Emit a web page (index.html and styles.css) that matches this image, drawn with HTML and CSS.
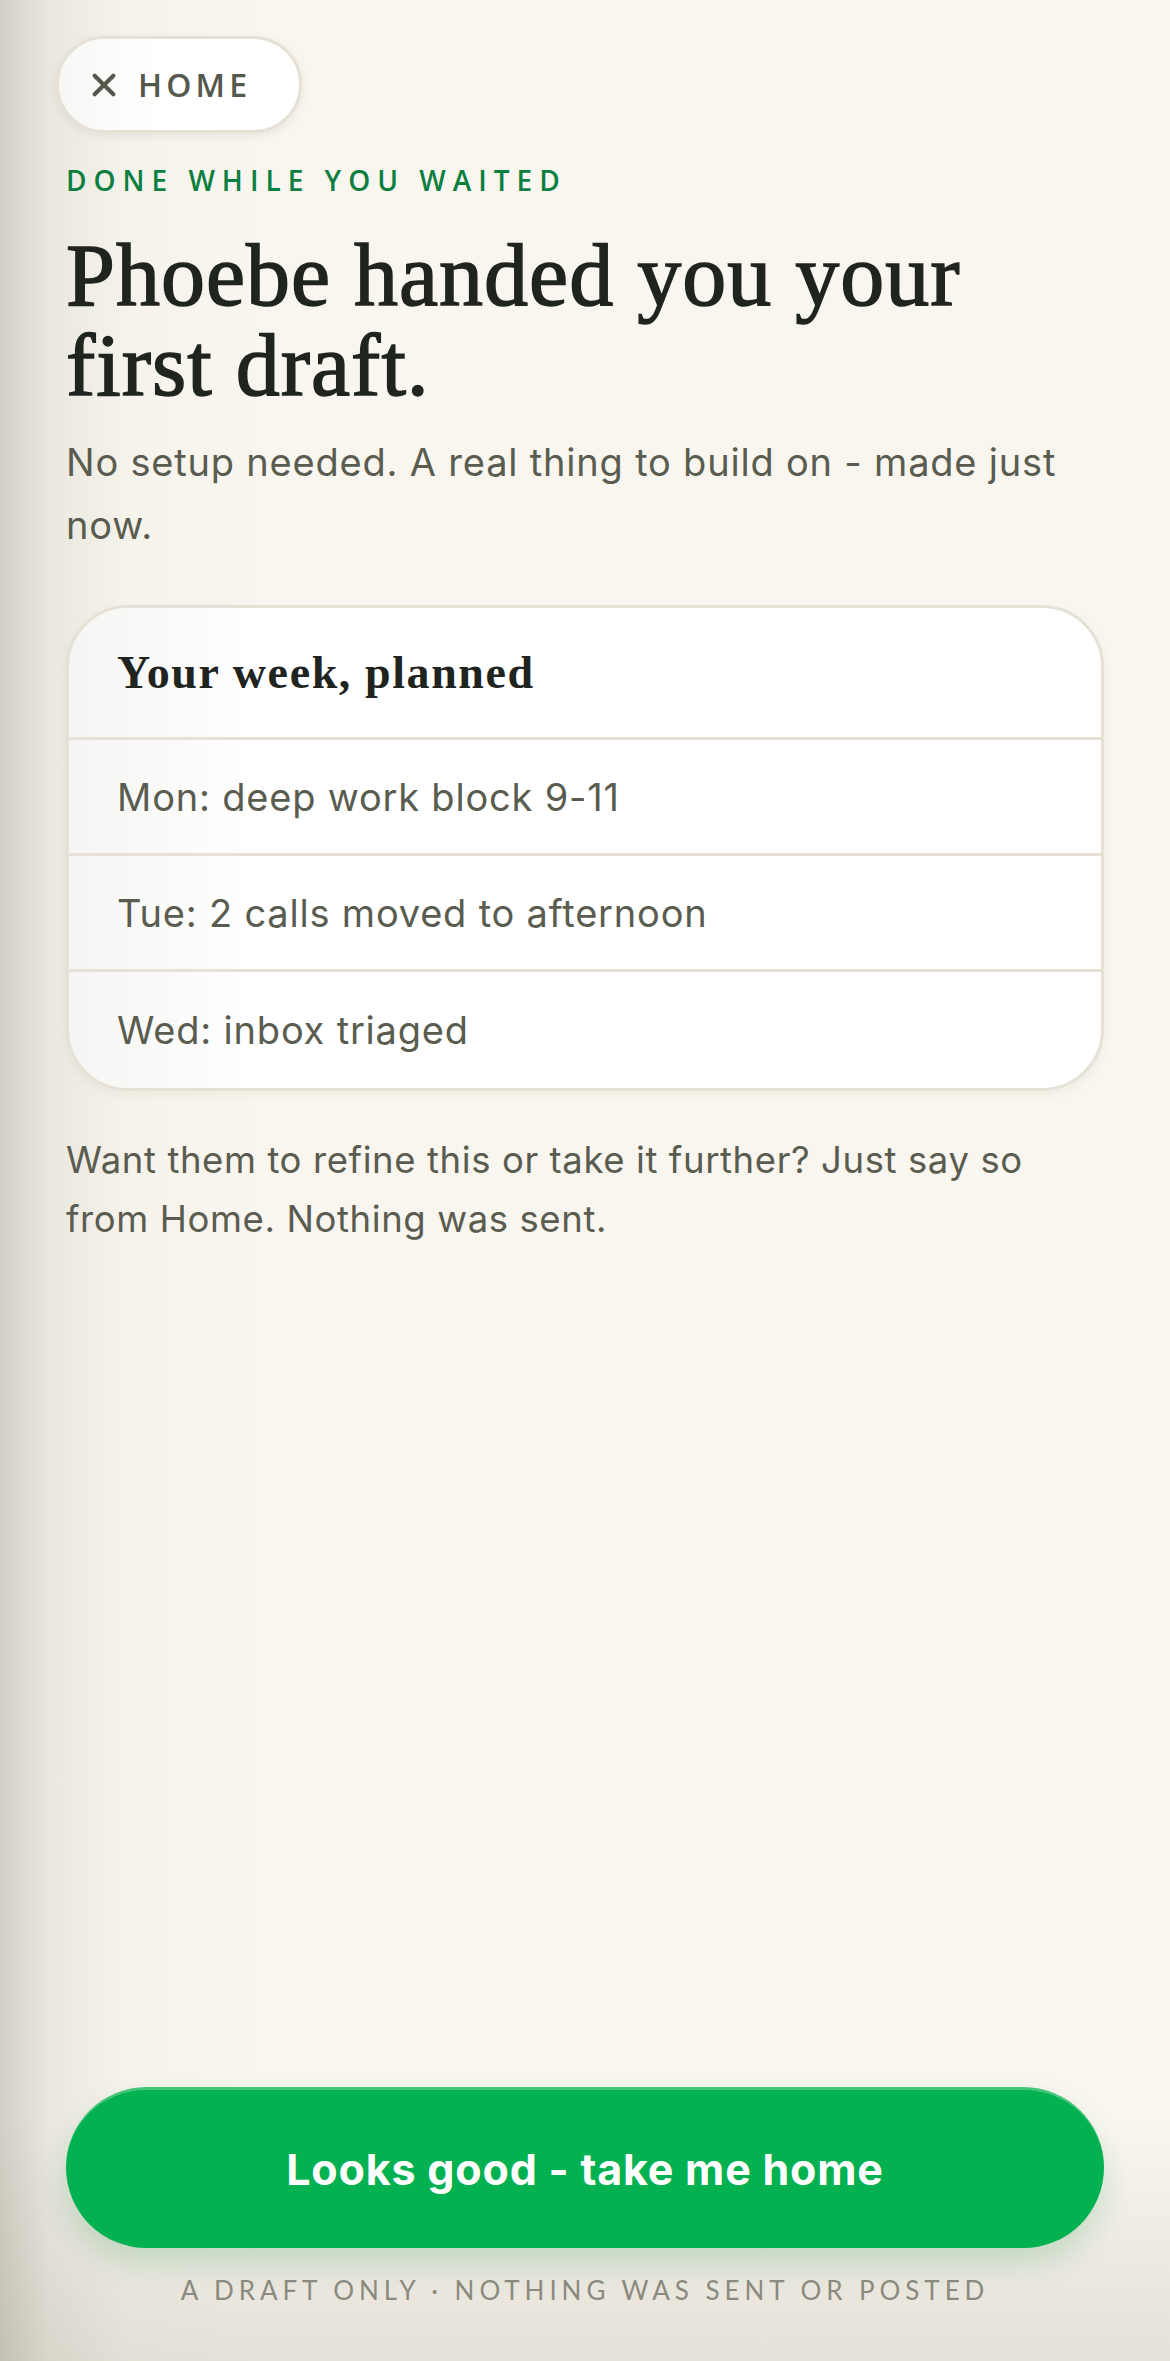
FILE: index.html
```html
<!DOCTYPE html>
<html lang="en">
<head>
<meta charset="UTF-8">
<meta name="viewport" content="width=device-width, initial-scale=1.0">
<title>First draft</title>

<link rel="stylesheet" href="styles.css">
</head>

<body>

<div class="page">

<button class="home-btn">
<svg class="home-x" viewBox="0 0 24 24" width="28" height="28"><path d="M4 4L20 20M20 4L4 20"/></svg>
<span>HOME</span>
</button>

<div class="eyebrow">DONE WHILE YOU WAITED</div>

<h1>Phoebe handed you your first draft.</h1>

<p class="lede">No setup needed. A real thing to build on - made just now.</p>

<div class="card">
<div class="card-title">Your week, planned</div>
<div class="row">Mon: deep work block 9-11</div>
<div class="row">Tue: 2 calls moved to afternoon</div>
<div class="row">Wed: inbox triaged</div>
</div>

<p class="note">Want them to refine this or take it further? Just say so from Home. Nothing was sent.</p>

<div class="footer">
<button class="cta">Looks good - take me home</button>
<div class="fineprint">A DRAFT ONLY · NOTHING WAS SENT OR POSTED</div>
</div>

</div>

</body>
</html>
```

FILE: styles.css
```css
*{box-sizing:border-box;}

html,body{height:100%;}

body{
margin:0;
font-family:Inter,"Noto Sans",sans-serif;
color:#5a5c50;
background:
linear-gradient(90deg,rgba(120,115,100,.3) 0,rgba(150,150,135,.15) 50px,rgba(200,195,180,.06) 130px,rgba(249,246,239,0) 260px),
linear-gradient(180deg,rgba(249,246,239,0) 0,rgba(249,246,239,0) 2120px,rgba(220,216,206,.7) 100%),
#f9f6ef;
}

.page{
min-height:100%;
display:flex;
flex-direction:column;
padding:36px 66px 0;
}

.home-btn{
align-self:flex-start;
margin-left:-10px;
height:97px;
padding:0 48px 0 31px;
display:flex;
align-items:center;
gap:20px;
border:3px solid #e6e1d4;
border-radius:50px;
background:linear-gradient(90deg,#f7f7f5,#fff 40%);
box-shadow:0 3px 8px rgba(120,110,90,.12);
font-family:"Open Sans",sans-serif;
font-weight:600;
font-size:32px;
letter-spacing:.13em;
color:#55584c;
}

.home-x{
stroke:#55584c;
stroke-width:3.6;
stroke-linecap:round;
fill:none;
}

.eyebrow{
margin-top:28px;
font-family:"Open Sans",sans-serif;
font-weight:600;
font-size:28px;
letter-spacing:.25em;
color:#0b7f3f;
}

h1{
margin:32px 0 0;
font-family:"Liberation Serif",serif;
font-weight:400;
font-size:88px;
line-height:90px;
letter-spacing:1px;
color:#1f241f;
-webkit-text-stroke:1.5px #1f241f;
}

.lede{
margin:20px 0 0;
font-size:38px;
line-height:63px;
letter-spacing:.8px;
color:#5a5c50;
}

.card{
margin-top:48px;
border:3px solid #e6e1d5;
border-radius:62px;
background:linear-gradient(90deg,#f5f5f3,#fff 18%);
box-shadow:0 4px 10px rgba(120,110,90,.08);
overflow:hidden;
}

.card-title{
height:132px;
padding:0 48px;
display:flex;
align-items:center;
font-family:"Liberation Serif",serif;
font-weight:700;
font-size:46px;
letter-spacing:1.6px;
color:#1f241f;
border-bottom:3px solid #e6e1d5;
}

.row{
height:116px;
padding:0 48px;
display:flex;
align-items:center;
font-size:38px;
letter-spacing:.8px;
color:#5a5c50;
border-bottom:3px solid #e6e1d5;
}

.row:last-child{border-bottom:none;}

.note{
margin:40px 0 0;
font-size:36.5px;
line-height:59px;
letter-spacing:.6px;
color:#5a5c50;
}

.footer{
margin-top:auto;
padding-bottom:55px;
display:flex;
flex-direction:column;
align-items:center;
}

.cta{
width:100%;
height:161px;
border:none;
border-top:3px solid #45c57a;
border-radius:90px;
background:#04b150;
box-shadow:0 16px 30px rgba(10,140,60,.18);
font-family:Inter,sans-serif;
font-weight:700;
font-size:43px;
letter-spacing:.8px;
color:#fff;
}

.fineprint{
margin-top:26px;
font-family:Lato,sans-serif;
font-size:26px;
letter-spacing:.19em;
color:#8a8a7e;
}
```
